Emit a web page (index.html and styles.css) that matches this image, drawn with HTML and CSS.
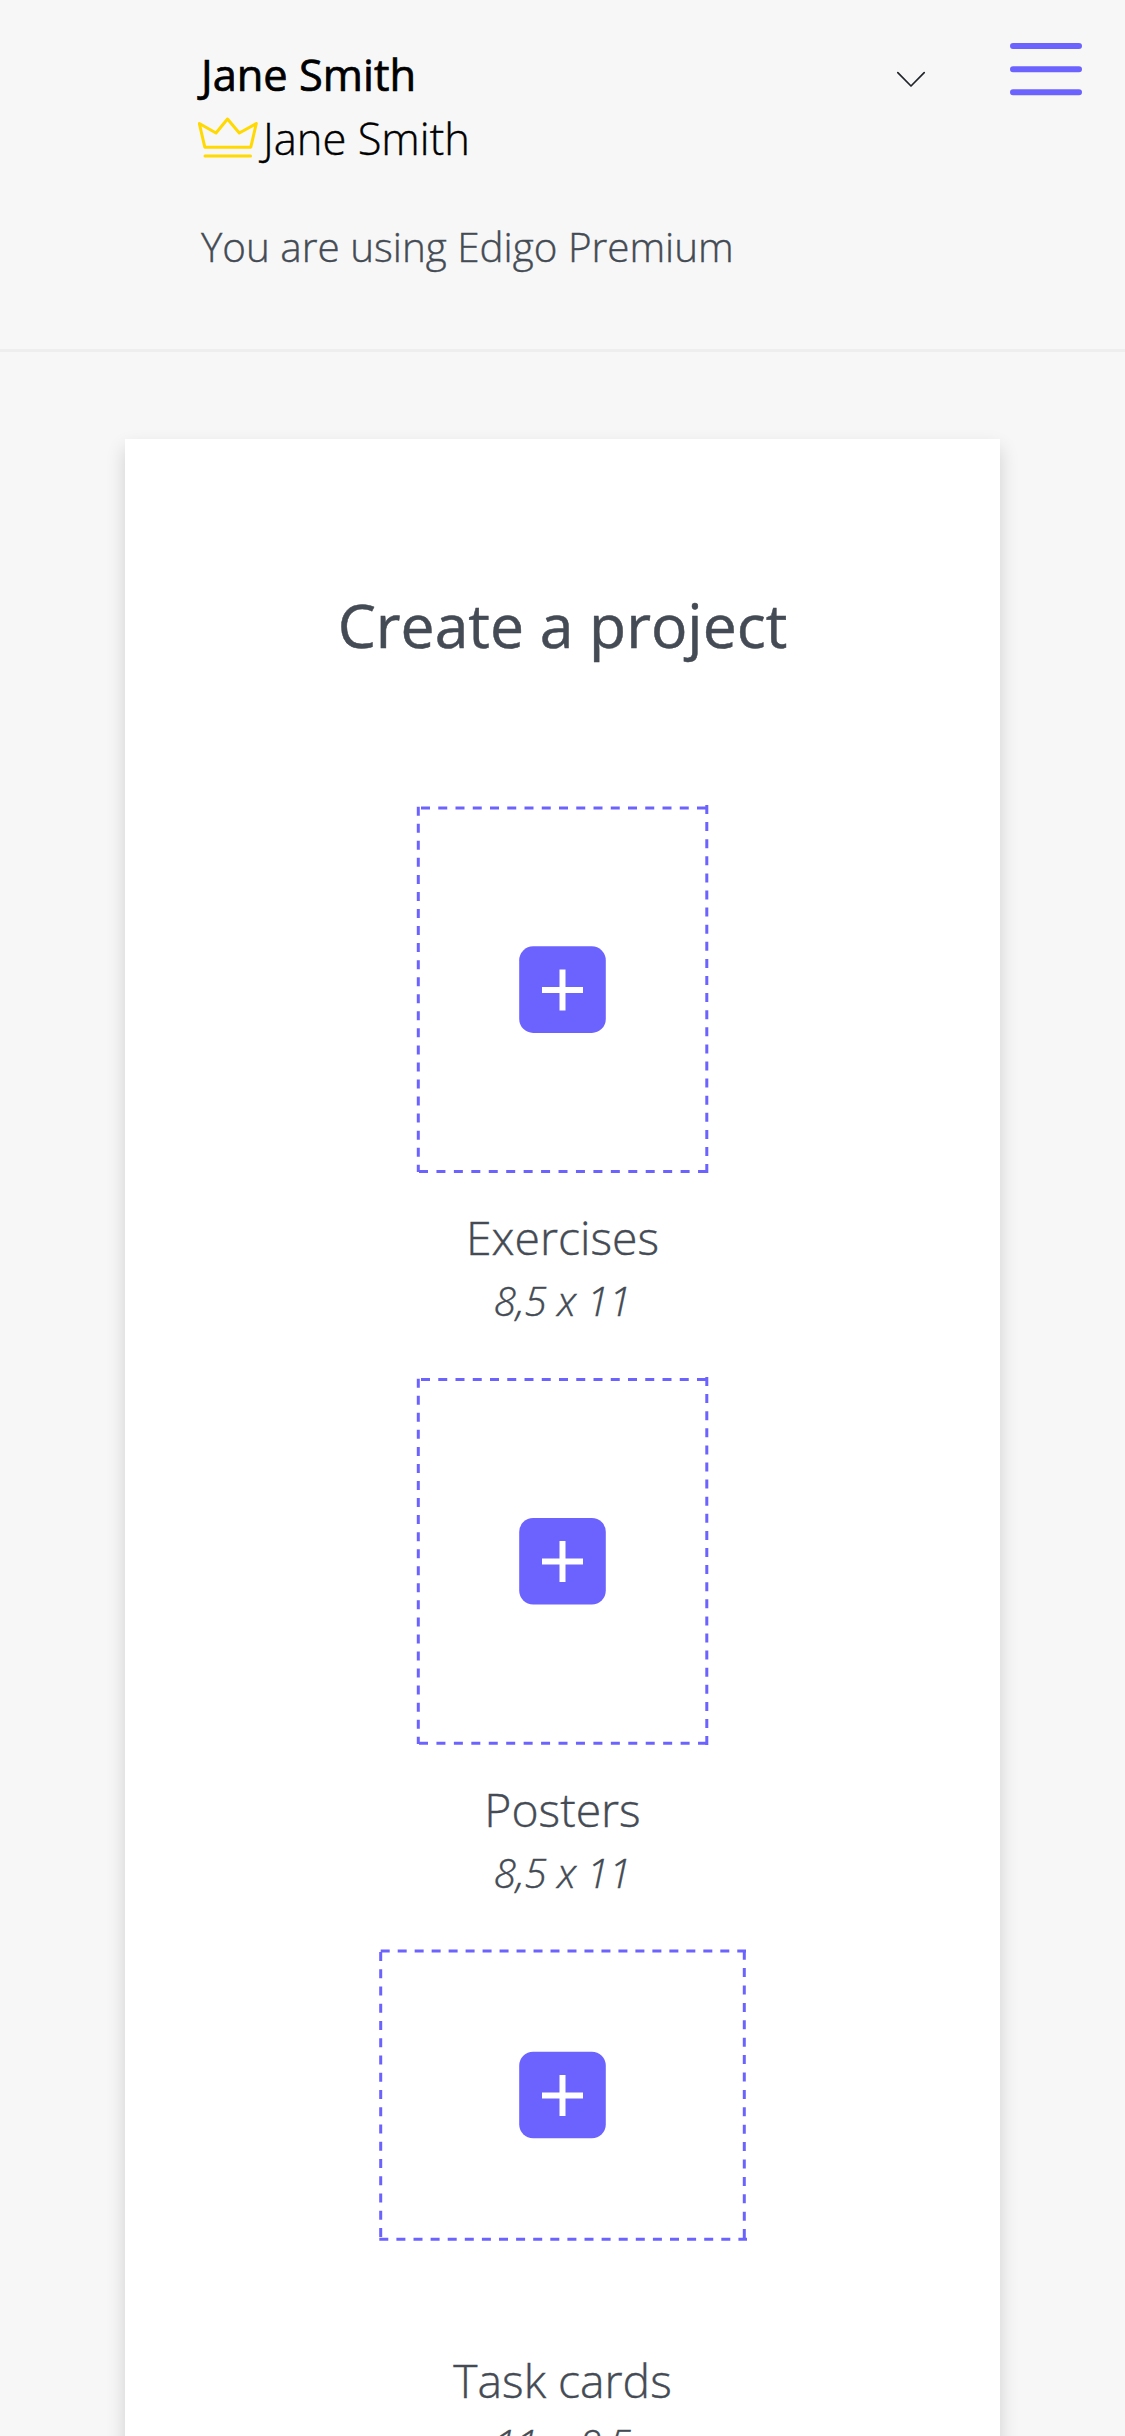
FILE: index.html
```html
<!DOCTYPE html>
<html lang="en">
<head>
<meta charset="utf-8">
<title>Edigo</title>
<link rel="stylesheet" href="styles.css">
</head>
<body>
<header class="header">
  <div class="account">
    <div class="name">Jane Smith</div>
    <div class="member">
      <svg class="crown" viewBox="0 0 60 42" fill="none" stroke="#ffd900" stroke-width="3" stroke-linecap="round" stroke-linejoin="round"><path d="M1.300 7.500 6.800 31.200H52.800L58.300 7.500 41.300 17 29.500 3 18 17ZM7 40H52.500"/></svg>
      <span class="member-name">Jane Smith</span>
    </div>
    <p class="plan">You are using Edigo Premium</p>
  </div>
  <svg class="chevron" viewBox="0 0 30 17" fill="none" stroke="#212529" stroke-width="1.7" stroke-linecap="round" stroke-linejoin="round"><path d="M1.800 1.700 15 15 28.200 1.700"/></svg>
  <svg class="menu" viewBox="0 0 72 54" stroke="#6c63ff" stroke-width="6" stroke-linecap="round"><path d="M3 4H69M3 27.200H69M3 50.300H69"/></svg>
</header>
<main class="card">
  <h1 class="title">Create a project</h1>
  <section class="project">
    <svg class="frame" viewBox="0 0 292 368"><path stroke-dasharray="9 8.250" d="M4 2H290"/><path stroke-dasharray="9 8.440" d="M2 365.500H291"/><path stroke-dasharray="9 8.050" d="M1.300 .7V366"/><path stroke-dasharray="9 8.100" d="M289.800-1V367"/><rect class="tile" x="102.200" y="140.300" width="86.600" height="86.600" rx="14"/><path class="plus" d="M125 184H166M145.500 163.500V204.500"/></svg>
    <h2 class="label">Exercises</h2>
    <p class="size">8,5 x 11</p>
  </section>
  <section class="project">
    <svg class="frame" viewBox="0 0 292 368"><path stroke-dasharray="9 8.250" d="M4 1.500H290"/><path stroke-dasharray="9 8.440" d="M2 365.200H291"/><path stroke-dasharray="9 8.050" d="M1.300 .7V366"/><path stroke-dasharray="9 8.100" d="M289.800-1V367"/><rect class="tile" x="102.200" y="140" width="86.600" height="86.600" rx="14"/><path class="plus" d="M125 183.500H166M145.500 163V204"/></svg>
    <h2 class="label">Posters</h2>
    <p class="size">8,5 x 11</p>
  </section>
  <section class="project">
    <svg class="frame wide" viewBox="0 0 368 292"><path stroke-dasharray="9 7.980" d="M1.700 2H367"/><path stroke-dasharray="9 8.100" d="M.3 290.300H368"/><path stroke-dasharray="9 8.250" d="M1.700 3V289"/><path stroke-dasharray="9 8.400" d="M365.300 1.700V290"/><rect class="tile" x="140.200" y="102.700" width="86.600" height="86.600" rx="14"/><path class="plus" d="M163 146.500H204M183.500 126V167"/></svg>
    <h2 class="label">Task cards</h2>
    <p class="size">11 x 8,5</p>
  </section>
</main>
</body>
</html>
```
FILE: styles.css
```css
* { box-sizing: border-box; margin: 0; }
html, body { height: 2436px; overflow: hidden; }
body { background: #f7f7f7; color: #444b54; font-family: "Open Sans", sans-serif; font-weight: 300; -webkit-text-stroke-width: .4px; }
svg { display: block; flex: none; }
.header { display: flex; align-items: flex-start; height: 352px; padding-left: 198px; border-bottom: 3px solid #eee; }
.account { width: 698px; padding-top: 43px; }
.name { padding-left: 3px; color: #000; font-size: 43.4px; font-weight: 400; line-height: 64px; -webkit-text-stroke-width: .7px; white-space: nowrap; }
.member { display: flex; color: #000; font-size: 43.5px; line-height: 64px; }
.crown { width: 60px; height: 42px; margin-top: 9px; }
.member-name { margin-left: 5px; }
.plan { margin-top: 44px; padding-left: 3px; font-size: 40.4px; line-height: 64px; }
.chevron { width: 30px; height: 17px; margin-top: 71px; }
.menu { width: 72px; height: 54px; margin: 42px 0 0 84px; }
.card { display: flex; flex-direction: column; align-items: center; width: 875px; height: 2100px; margin: 87px auto 0; padding-top: 141px; background: #fff; box-shadow: 0 9px 18px rgba(0,0,0,.16); }
.title { font-size: 60.6px; font-weight: 400; line-height: 90px; margin-bottom: 136px; -webkit-text-stroke-width: .5px; }
.project { display: flex; flex-direction: column; align-items: center; height: 571.5px; }
.frame { width: 292px; height: 368px; fill: none; overflow: visible; stroke: #6c63ff; stroke-width: 3; }
.wide { width: 368px; height: 292px; margin-bottom: 76px; }
.tile { fill: #6c63ff; stroke: none; }
.plus { stroke: #fff; stroke-width: 6; }
.label { margin-top: 31px; font-size: 46.3px; font-weight: 300; line-height: 66px; }
.size { font-size: 40.5px; font-style: italic; line-height: 60px; }
```
